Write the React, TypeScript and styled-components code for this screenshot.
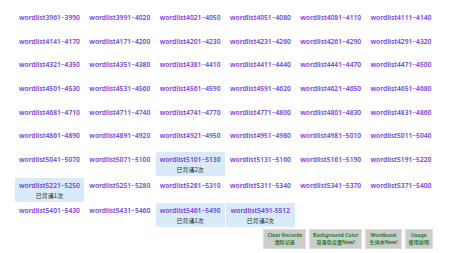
import React, { FC } from "react";
import styled, { createGlobalStyle } from "styled-components";

type Cell = {
  label: string;
  done?: number;
};

const START = 3961;
const LAST = 5512;

const buildCells = (): Cell[] => {
  const done: Record<number, number> = { 5101: 2, 5221: 1, 5461: 1, 5491: 2 };
  const cells: Cell[] = [];
  for (let from = START; from <= LAST; from += 30) {
    const to = from + 29;
    const label = to > LAST ? `wordlist${from}-${LAST}` : `wordlist${from}~${to}`;
    cells.push({ label, done: done[from] });
  }
  return cells;
};

const buttons = [
  { en: "Clear Records", zh: "清除记录" },
  { en: "Background Color", zh: "背景色设置New!" },
  { en: "Wordbook", zh: "生词本New!" },
  { en: "Usage", zh: "使用说明" },
];

const App: FC = () => {
  const cells = buildCells();

  return (
    <Page>
      <GlobalStyle />
      <Grid>
        {cells.map((cell) => (
          <Item key={cell.label} done={!!cell.done}>
            <ListLink href="#">{cell.label}</ListLink>
            {cell.done && <Status>已背诵{cell.done}次</Status>}
          </Item>
        ))}
      </Grid>
      <Toolbar>
        {buttons.map((b) => (
          <ToolButton key={b.en}>
            <span>{b.en}</span>
            <span>{b.zh}</span>
          </ToolButton>
        ))}
      </Toolbar>
    </Page>
  );
};

export default App;

const GlobalStyle = createGlobalStyle`
  html, body {
    margin: 0;
    padding: 0;
    background: #ffffff;
  }
  body {
    font-family: "Noto Sans", "Noto Sans CJK SC", sans-serif;
  }
`;

const Page = styled.div`
  width: 450px;
  height: 253px;
  padding: 10px 0 0 15px;
  box-sizing: border-box;
  overflow: hidden;
`;

const Grid = styled.div`
  display: grid;
  grid-template-columns: repeat(6, 69px);
  column-gap: 1.3px;
  row-gap: 1.67px;
  align-items: start;
`;

const Item = styled.div<{ done: boolean }>`
  display: flex;
  flex-direction: column;
  align-items: center;
  min-height: 22px;
  box-sizing: border-box;
  padding: 3px 0 1px;
  background: ${(props) => (props.done ? "#d9ebfb" : "transparent")};
`;

const ListLink = styled.a`
  font-size: 6.7px;
  font-weight: 600;
  line-height: 10px;
  color: #7440e4;
  text-decoration: none;
  white-space: nowrap;
`;

const Status = styled.span`
  font-size: 6px;
  line-height: 10px;
  color: #2a2a2a;
  font-family: "Noto Sans CJK SC", sans-serif;
`;

const Toolbar = styled.div`
  display: flex;
  justify-content: flex-end;
  gap: 3px;
  margin-top: 2px;
  padding-right: 17px;
`;

const ToolButton = styled.button`
  display: flex;
  flex-direction: column;
  align-items: center;
  justify-content: center;
  height: 20px;
  padding: 0 3px;
  background: #cccccc;
  border: 1px solid #dddddd;
  color: #2e7d32;
  font-family: "Noto Sans", "Noto Sans CJK SC", sans-serif;
  font-size: 5.1px;
  font-weight: 700;
  line-height: 7px;
  cursor: pointer;
`;
